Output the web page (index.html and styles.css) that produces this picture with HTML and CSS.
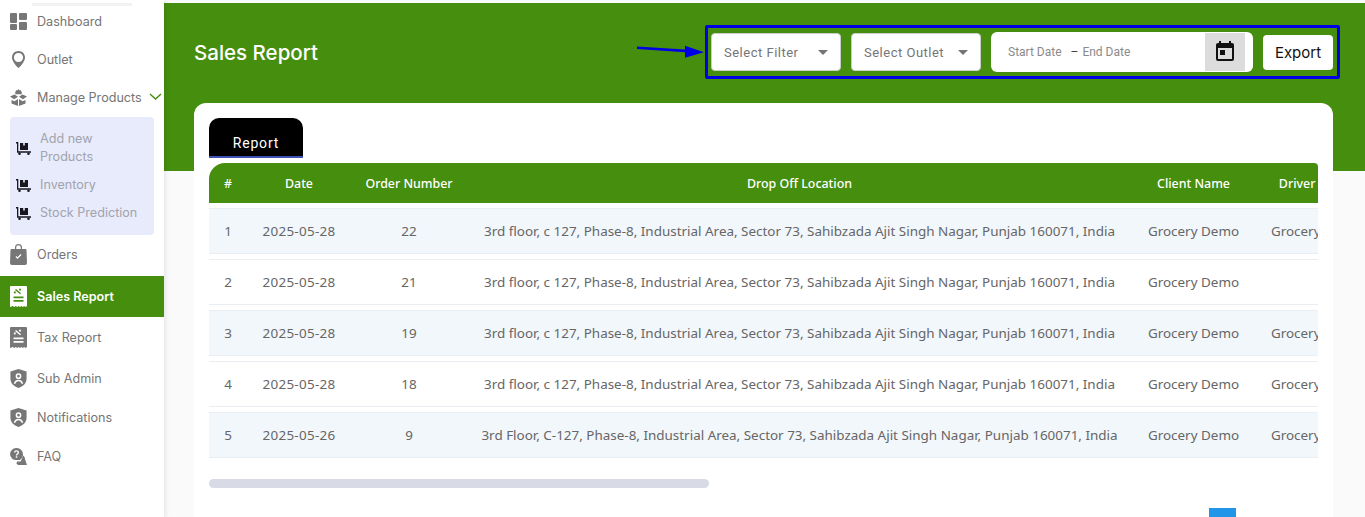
FILE: index.html
```html
<!DOCTYPE html>
<html lang="en">
<head>
<meta charset="utf-8">
<title>Sales Report</title>
<link rel="stylesheet" href="styles.css">
</head>
<body>
<div class="app">
  <aside class="sidebar">
    <div class="logo-edge"></div>
    <nav class="nav">
      <a class="nav-item"><svg class="ic" viewBox="0 0 17 17"><path d="M1 0h5a1 1 0 0 1 1 1v8a1 1 0 0 1-1 1H1a1 1 0 0 1-1-1V1a1 1 0 0 1 1-1zM1 11h5a1 1 0 0 1 1 1v4a1 1 0 0 1-1 1H1a1 1 0 0 1-1-1v-4a1 1 0 0 1 1-1zM10 0h6a1 1 0 0 1 1 1v5a1 1 0 0 1-1 1h-6a1 1 0 0 1-1-1V1a1 1 0 0 1 1-1zM10 9h6a1 1 0 0 1 1 1v6a1 1 0 0 1-1 1h-6a1 1 0 0 1-1-1v-6a1 1 0 0 1 1-1z"/></svg><span>Dashboard</span></a>
      <a class="nav-item"><svg class="ic" viewBox="0 0 17 17"><path fill-rule="evenodd" d="M8.500 0C4.700 0 2 2.800 2 6.400c0 4 4.300 8.600 6.500 10.600 2.200-2 6.500-6.600 6.500-10.600C15 2.800 12.300 0 8.500 0zm0 1.900c2.700 0 4.600 2 4.600 4.500s-1.900 4.500-4.600 4.500-4.600-2-4.600-4.500 1.900-4.500 4.600-4.500z"/></svg><span>Outlet</span></a>
      <a class="nav-item nav-open"><svg class="ic" viewBox="0 0 17 17"><path d="M8.500 0l.8 1.200 1.300-.3.300 1.300 1.200.7-.7 1.200.7 1.100H5l.6-1.100-.7-1.200 1.200-.7.300-1.300 1.300.3zM0 7.500L4.500 5.600 8 7.800 4 10.300zM17 7.500l-4.500-1.900L9 7.800l4 2.500zM1.500 11l3 1.200 3.500-2.200v7l-6.500-2.500zM15.500 11l-3 1.200L9 10v7l6.500-2.500z"/></svg><span>Manage Products</span><svg class="chev" viewBox="0 0 13 7"><path d="M1 1l5.500 5L12 1"/></svg></a>
      <div class="submenu">
        <a class="sub-item"><svg class="cart" viewBox="0 0 15 13"><path d="M0 0h2.300v9.300H15v1.400H1V1.400H0zM4 1h3.200v2.600h1.600V1H12v7H4z"/><circle cx="3.500" cy="11.700" r="1.300"/><circle cx="12.500" cy="11.700" r="1.300"/></svg><span>Add new<br>Products</span></a>
        <a class="sub-item"><svg class="cart" viewBox="0 0 15 13"><path d="M0 0h2.300v9.300H15v1.400H1V1.400H0zM4 1h3.200v2.600h1.600V1H12v7H4z"/><circle cx="3.500" cy="11.700" r="1.300"/><circle cx="12.500" cy="11.700" r="1.300"/></svg><span>Inventory</span></a>
        <a class="sub-item"><svg class="cart" viewBox="0 0 15 13"><path d="M0 0h2.300v9.300H15v1.400H1V1.400H0zM4 1h3.200v2.600h1.600V1H12v7H4z"/><circle cx="3.500" cy="11.700" r="1.300"/><circle cx="12.500" cy="11.700" r="1.300"/></svg><span>Stock Prediction</span></a>
      </div>
      <a class="nav-item orders"><svg class="ic ic-tall" viewBox="0 0 17 21"><path fill-rule="evenodd" d="M5 5V3.500a3.500 3.500 0 0 1 7 0V5h3.500a1 1 0 0 1 1 1l.5 13a2 2 0 0 1-2 2H2a2 2 0 0 1-2-2L.5 6a1 1 0 0 1 1-1zM6.200 5h4.600V3.500a2.300 2.300 0 0 0-4.600 0zM5.500 13l2 2 4-4-.9-.9-3.100 3.100-1.100-1.100z"/></svg><span>Orders</span></a>
      <a class="nav-item nav-active"><svg class="ic ic-tall" viewBox="0 0 17 21"><path fill-rule="evenodd" d="M1 0h15a1 1 0 0 1 1 1v19l-1.400 1-1.400-1-1.400 1-1.400-1-1.400 1-1.500-1-1.400 1-1.400-1-1.400 1-1.400-1L0 21V1a1 1 0 0 1 1-1zM3.500 10.500v1.700h10v-1.700zM3.500 14v1.700h10V14zM6 3L5 4l5 4.200 1-1zM5.800 6.300a1 1 0 1 0 0 .1zM11 3.500a1 1 0 1 0 0 .1z"/></svg><span>Sales Report</span></a>
      <a class="nav-item plain"><svg class="ic ic-tall" viewBox="0 0 17 21"><path fill-rule="evenodd" d="M1 0h15a1 1 0 0 1 1 1v19l-1.400 1-1.400-1-1.400 1-1.400-1-1.400 1-1.500-1-1.400 1-1.400-1-1.400 1-1.400-1L0 21V1a1 1 0 0 1 1-1zM3.500 10.500v1.700h10v-1.700zM3.500 14v1.700h10V14zM6 3L5 4l5 4.200 1-1zM5.800 6.300a1 1 0 1 0 0 .1zM11 3.500a1 1 0 1 0 0 .1z"/></svg><span>Tax Report</span></a>
      <a class="nav-item sub-admin"><svg class="ic ic-shield" viewBox="0 0 17 20"><path fill-rule="evenodd" d="M8.500 0L17 2.500V10c0 5-3.500 8.300-8.500 10C3.500 18.300 0 15 0 10V2.500zM8.500 4.500a3 3 0 1 0 0 6 3 3 0 0 0 0-6zm0 1.600a1.400 1.400 0 1 1 0 2.800 1.400 1.400 0 0 1 0-2.800zM3.500 15.500h1.800c.3-1.600 1.600-2.600 3.200-2.600s2.900 1 3.200 2.600h1.800c-.4-2.600-2.500-4.300-5-4.300s-4.600 1.700-5 4.300z"/></svg><span>Sub Admin</span></a>
      <a class="nav-item short"><svg class="ic ic-shield" viewBox="0 0 17 20"><path fill-rule="evenodd" d="M8.500 0L17 2.500V10c0 5-3.500 8.300-8.500 10C3.500 18.300 0 15 0 10V2.500zM8.500 4.500a3 3 0 1 0 0 6 3 3 0 0 0 0-6zm0 1.600a1.400 1.400 0 1 1 0 2.800 1.400 1.400 0 0 1 0-2.800zM3.500 15.500h1.800c.3-1.600 1.600-2.600 3.200-2.600s2.900 1 3.200 2.600h1.800c-.4-2.600-2.500-4.300-5-4.300s-4.600 1.700-5 4.300z"/></svg><span>Notifications</span></a>
      <a class="nav-item short"><svg class="ic" viewBox="0 0 17 17"><path fill-rule="evenodd" d="M6.500 0a6.500 6.500 0 0 1 5.800 9.400L10 12H6.500A6 6 0 0 1 0 6a6.300 6.300 0 0 1 6.500-6zM5.800 8.200v1.500h1.500V8.200zM6.500 2.300C5 2.300 4 3.200 4 4.500h1.400c0-.6.400-1 1.100-1s1.100.4 1.100 1c0 1.200-1.800 1.200-1.800 3h1.400c0-1.100 1.800-1.500 1.800-3 0-1.300-1-2.200-2.500-2.200z"/><path d="M13.200 7.500c1 .9 1.800 2.200 1.800 3.700l2 5.800H8.500a6 6 0 0 1-2-1.200L7 13.500h3.700z"/></svg><span>FAQ</span></a>
    </nav>
  </aside>

  <main class="main">
    <header class="hero">
      <h1 class="title">Sales Report</h1>
      <div class="filters">
        <div class="select select-filter"><span>Select Filter</span><i class="caret"></i></div>
        <div class="select select-outlet"><span>Select Outlet</span><i class="caret"></i></div>
        <div class="range">
          <span class="range-text">Start Date</span><span class="range-dash">–</span><span class="range-text">End Date</span>
          <span class="range-btn"><svg class="cal" viewBox="0 0 18 20"><path fill-rule="evenodd" d="M3 0h2v2h8V0h2v2h1a2 2 0 0 1 2 2v14a2 2 0 0 1-2 2H2a2 2 0 0 1-2-2V4a2 2 0 0 1 2-2h1zM2 7v11h14V7zM4 9h5v5H4z"/></svg></span>
        </div>
        <button class="export">Export</button>
      </div>
    </header>

    <section class="card">
      <div class="tabs"><div class="tab">Report</div></div>
      <div class="table-wrap">
        <table class="report">
          <colgroup><col class="c1"><col class="c2"><col class="c3"><col class="c4"><col class="c5"><col class="c6"></colgroup>
          <thead>
            <tr><th>#</th><th>Date</th><th>Order Number</th><th>Drop Off Location</th><th>Client Name</th><th>Driver Name</th></tr>
          </thead>
          <tbody>
            <tr><td>1</td><td class="num">2025-05-28</td><td>22</td><td>3rd floor, c 127, Phase-8, Industrial Area, Sector 73, Sahibzada Ajit Singh Nagar, Punjab 160071, India</td><td>Grocery Demo</td><td>Grocery Demo</td></tr>
            <tr class="alt"><td>2</td><td class="num">2025-05-28</td><td>21</td><td>3rd floor, c 127, Phase-8, Industrial Area, Sector 73, Sahibzada Ajit Singh Nagar, Punjab 160071, India</td><td>Grocery Demo</td><td></td></tr>
            <tr><td>3</td><td class="num">2025-05-28</td><td>19</td><td>3rd floor, c 127, Phase-8, Industrial Area, Sector 73, Sahibzada Ajit Singh Nagar, Punjab 160071, India</td><td>Grocery Demo</td><td>Grocery Demo</td></tr>
            <tr class="alt"><td>4</td><td class="num">2025-05-28</td><td>18</td><td>3rd floor, c 127, Phase-8, Industrial Area, Sector 73, Sahibzada Ajit Singh Nagar, Punjab 160071, India</td><td>Grocery Demo</td><td>Grocery Demo</td></tr>
            <tr><td>5</td><td class="num">2025-05-26</td><td>9</td><td>3rd Floor, C-127, Phase-8, Industrial Area, Sector 73, Sahibzada Ajit Singh Nagar, Punjab 160071, India</td><td>Grocery Demo</td><td>Grocery Demo</td></tr>
          </tbody>
        </table>
      </div>
      <div class="scroll-track"><div class="scroll-thumb"></div></div>
      <div class="pager"><span class="page-current"></span></div>
    </section>

    <div class="annot-box"></div>
    <svg class="annot-arrow" viewBox="0 0 70 16"><path d="M0 2.500l48 2.900V1.700l19 6.600-19 5.400V8.300L0 5z"/></svg>
  </main>
</div>
</body>
</html>
```
FILE: styles.css
```css
* { box-sizing: border-box; }
html, body { margin: 0; height: 517px; overflow: hidden; background: #fff; }
body { font-family: "Noto Sans", sans-serif; color: #666; }
.app { display: flex; height: 517px; overflow: hidden; }

.sidebar { width: 164px; flex: none; background: #fff; position: relative; z-index: 2; box-shadow: 2px 0 4px rgba(0,0,0,.08); font-family: Inter, sans-serif; }
.logo-edge { height: 3px; width: 100px; margin: 3px 0 0 32px; background: #f2f2f2; }
.nav { display: flex; flex-direction: column; margin-top: -4px; }
.nav-item { display: flex; align-items: center; height: 38px; padding-left: 10px; font-size: 12.600px; color: #757575; }
.nav-item.orders { height: 39px; }
.nav-item.nav-active { height: 41px; margin-top: 2px; background: #458e0e; color: #fff; font-weight: 600; }
.nav-item.plain { height: 41px; }
.nav-item.sub-admin { height: 40px; }
.nav-item.short { height: 39px; }
.ic { width: 17px; height: 17px; margin-right: 10px; flex: none; fill: #777; }
.ic-tall { height: 21px; }
.ic-shield { height: 19px; }
.nav-active .ic { fill: #fff; }
.chev { width: 13px; height: 7px; margin-left: 7px; margin-top: -2px; flex: none; fill: none; stroke: #458e0e; stroke-width: 1.4; }
.submenu { margin: 1px 10px 0; height: 118px; padding: 8px 0 0 6px; background: #e8ebfc; border-radius: 4px; display: flex; flex-direction: column; }
.sub-item { display: flex; align-items: center; min-height: 28px; font-size: 12.600px; line-height: 18px; color: #a1a3ad; white-space: nowrap; }
.sub-item:first-child { min-height: 46px; }
.cart { width: 15px; height: 13px; margin-right: 9px; flex: none; fill: #16171f; }

.main { flex: 1; min-width: 0; position: relative; background: #fafafa; }
.hero { height: 168px; margin-top: 3px; padding: 22px 32px 0 30px; background: #458e0e; display: flex; align-items: flex-start; justify-content: space-between; }
.title { margin: 10px 0 0; font-size: 20.500px; line-height: 36px; font-weight: 500; color: #fff; font-family: Inter, sans-serif; }
.filters { display: flex; align-items: center; margin-top: 7px; }
.select { height: 38px; background: #fff; border-radius: 4px; border: 1px solid #ccc; padding: 0 12px; display: flex; align-items: center; justify-content: space-between; font: 400 13px Roboto, sans-serif; letter-spacing: .5px; color: #757575; }
.select-filter { width: 130px; margin-right: 10px; }
.select-outlet { width: 130px; margin-right: 10px; }
.caret { width: 0; height: 0; border-left: 5px solid transparent; border-right: 5px solid transparent; border-top: 5px solid #757575; }
.range { width: 262px; height: 40px; margin-right: 10px; padding-left: 17px; background: #fff; border-radius: 6px; display: flex; align-items: center; font: 400 12px Roboto, sans-serif; color: #8a8a8a; }
.range-dash { margin: 0 4px 0 9px; color: #444; }
.range-btn { margin-left: auto; margin-right: 8px; width: 40px; height: 38px; padding-bottom: 3px; background: #dcdcdc; display: flex; align-items: center; justify-content: center; }
.cal { width: 18px; height: 20px; fill: #111; }
.export { width: 70px; height: 35px; border: 0; border-radius: 4px; background: #fff; color: #111; font: 400 15px Inter, sans-serif; padding: 0; }

.card { position: absolute; left: 30px; top: 103px; width: 1139px; height: 440px; padding: 15px 15px 0; background: #fff; border-radius: 12px; }
.tabs { height: 40px; }
.tab { width: 94px; height: 40px; padding-top: 17px; text-align: center; background: #000; color: #fff; border-radius: 10px 10px 0 0; border-bottom: 2px solid #3f51b5; font: 400 14px/16px Roboto, sans-serif; letter-spacing: .8px; }
.table-wrap { margin-top: 5px; width: 1109px; overflow: hidden; border-radius: 16px 4px 0 0; }
.report { width: 1169px; margin-top: -5px; table-layout: fixed; border-collapse: separate; border-spacing: 0 5px; font-family: "Noto Sans", sans-serif; }
.c1 { width: 38px; } .c2 { width: 104px; } .c3 { width: 116px; } .c4 { width: 665px; } .c5 { width: 123px; } .c6 { width: 123px; }
.report th { height: 40px; padding: 0; background: #458e0e; color: #fff; font-size: 12.400px; font-weight: 500; white-space: nowrap; }
.report td { height: 46px; padding: 0; text-align: center; white-space: nowrap; font-size: 13.450px; color: #666; background: #f2f7fc; border-top: 1px solid #eaedf2; border-bottom: 1px solid #eaedf2; }
.report td.num { letter-spacing: .3px; }
.report tr.alt td { background: #fff; }
.scroll-track { margin-top: 16px; height: 9px; width: 1109px; }
.scroll-thumb { width: 500px; height: 9px; background: #d8dae5; border-radius: 5px; }
.pager { display: flex; justify-content: flex-end; padding-right: 82px; margin-top: 20px; }
.page-current { width: 27px; height: 27px; background: #2196e8; }

.annot-box { position: absolute; left: 541px; top: 25px; width: 635px; height: 54px; border: 3px solid #0000e6; border-radius: 2px; pointer-events: none; }
.annot-arrow { position: absolute; left: 473px; top: 44px; width: 70px; height: 16px; fill: #0000e6; }
```
